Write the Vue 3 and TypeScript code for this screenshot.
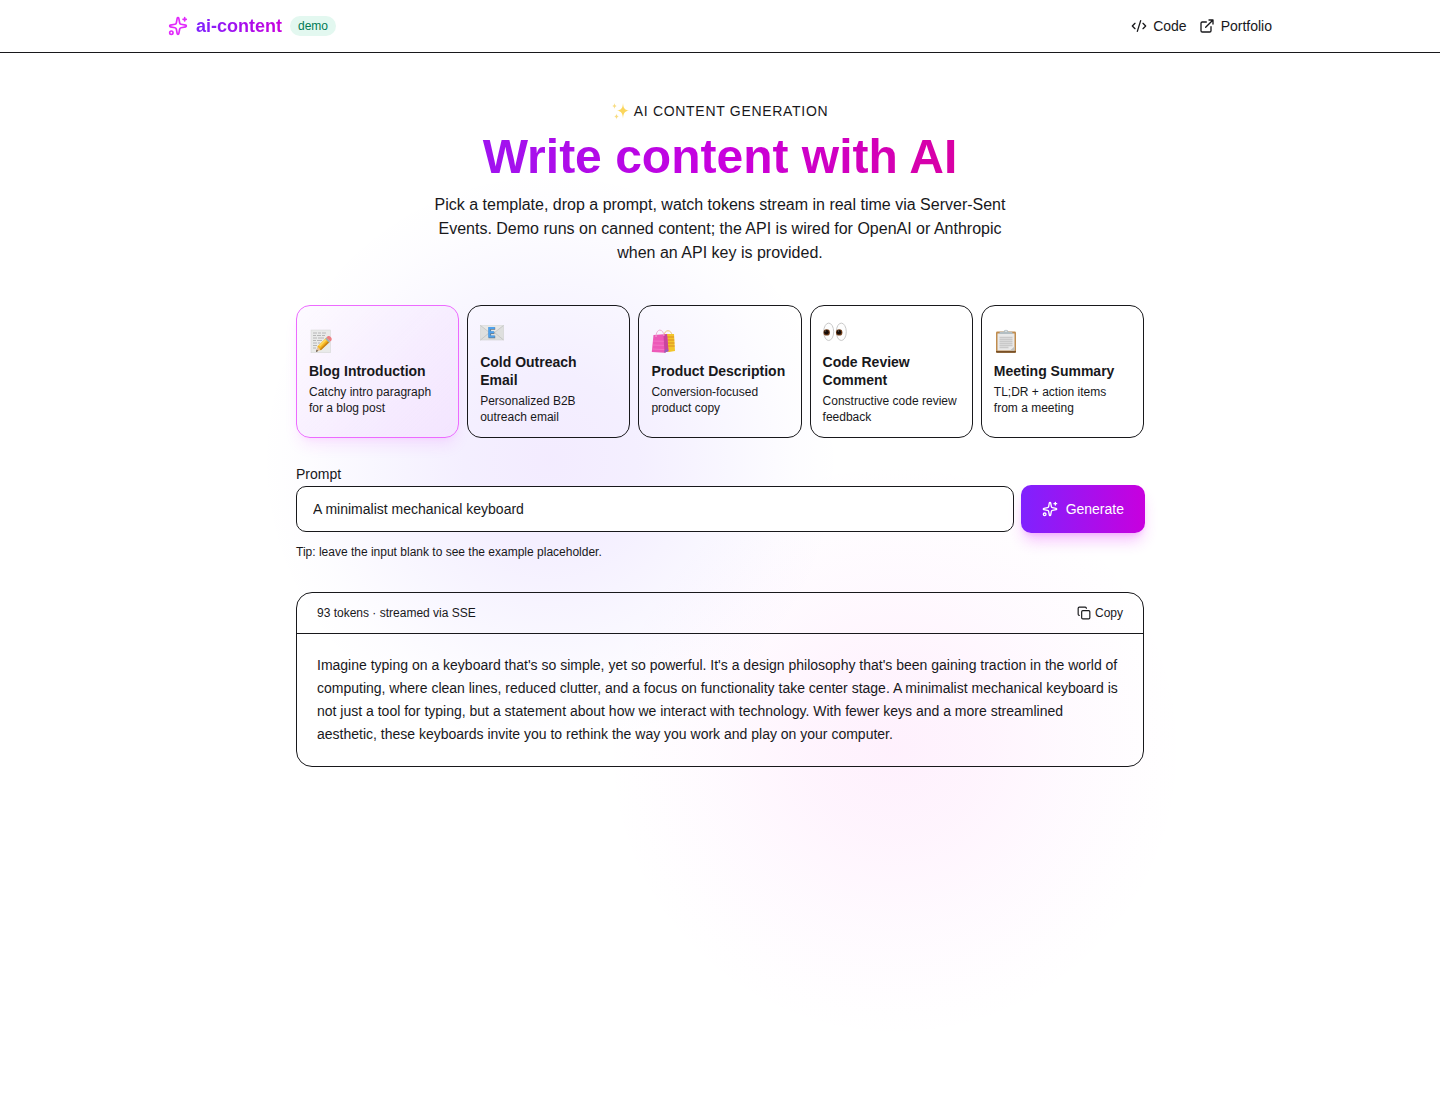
<script setup lang="ts">
import { ref } from 'vue'

interface Template {
  id: string
  title: string
  desc: string
}

const templates: Template[] = [
  { id: 'blog', title: 'Blog Introduction', desc: 'Catchy intro paragraph for a blog post' },
  { id: 'email', title: 'Cold Outreach Email', desc: 'Personalized B2B outreach email' },
  { id: 'product', title: 'Product Description', desc: 'Conversion-focused product copy' },
  { id: 'review', title: 'Code Review Comment', desc: 'Constructive code review feedback' },
  { id: 'meeting', title: 'Meeting Summary', desc: 'TL;DR + action items from a meeting' },
]

const selected = ref('blog')
const prompt = ref('A minimalist mechanical keyboard')
const tokens = 93
const output =
  "Imagine typing on a keyboard that's so simple, yet so powerful. It's a design philosophy that's been gaining traction in the world of computing, where clean lines, reduced clutter, and a focus on functionality take center stage. A minimalist mechanical keyboard is not just a tool for typing, but a statement about how we interact with technology. With fewer keys and a more streamlined aesthetic, these keyboards invite you to rethink the way you work and play on your computer."

const sparkle =
  'M11.017 2.814a1 1 0 0 1 1.966 0l1.051 5.558a2 2 0 0 0 1.594 1.594l5.558 1.051a1 1 0 0 1 0 1.966l-5.558 1.051a2 2 0 0 0-1.594 1.594l-1.051 5.558a1 1 0 0 1-1.966 0l-1.051-5.558a2 2 0 0 0-1.594-1.594l-5.558-1.051a1 1 0 0 1 0-1.966l5.558-1.051a2 2 0 0 0 1.594-1.594z'
</script>

<template>
  <div class="page">
    <div class="glow glow-violet" aria-hidden="true"></div>
    <div class="glow glow-pink" aria-hidden="true"></div>

    <header class="topbar">
      <div class="topbar-inner">
        <div class="brand">
          <svg class="line-icon brand-icon" width="20" height="20" viewBox="0 0 24 24">
            <path :d="sparkle" /><path d="M20 2v4M22 4h-4" /><circle cx="4" cy="20" r="2" />
          </svg>
          <span class="brand-name">ai-content</span>
          <span class="badge">demo</span>
        </div>
        <nav class="links">
          <a href="#code">
            <svg class="line-icon" width="16" height="16" viewBox="0 0 24 24">
              <path d="m18 16 4-4-4-4M6 8l-4 4 4 4M14.5 4l-5 16" />
            </svg>
            Code
          </a>
          <a href="#portfolio">
            <svg class="line-icon" width="16" height="16" viewBox="0 0 24 24">
              <path d="M15 3h6v6M10 14 21 3M18 13v6a2 2 0 0 1-2 2H5a2 2 0 0 1-2-2V8a2 2 0 0 1 2-2h6" />
            </svg>
            Portfolio
          </a>
        </nav>
      </div>
    </header>

    <main class="main">
      <section class="hero">
        <p class="eyebrow">
          <svg width="18" height="18" viewBox="0 0 18 18" aria-hidden="true">
            <path d="M11 1c.4 5 1.300 6.800 6 7.500-4.700.8-5.600 3-6 8-.4-5-1.300-7.200-6-8 4.700-.7 5.600-2.500 6-7.500z" fill="#fbd65c" />
            <path d="M2.500 1c.2 2 .8 2.600 2.500 3-1.700.4-2.300 1-2.500 3C2.300 5 1.700 4.400 0 4c1.700-.4 2.300-1 2.500-3zM4.500 11.500c.2 2 .8 2.600 2.500 3-1.700.4-2.300 1-2.500 3-.2-2-.8-2.600-2.500-3 1.700-.4 2.300-1 2.500-3z" fill="#f8dc80" />
          </svg>
          AI Content Generation
        </p>
        <h1>Write content with AI</h1>
        <p class="lead">
          Pick a template, drop a prompt, watch tokens stream in real time via Server-Sent Events. Demo runs on
          canned content; the API is wired for OpenAI or Anthropic when an API key is provided.
        </p>
      </section>

      <section class="templates" aria-label="Templates">
        <button
          v-for="t in templates"
          :key="t.id"
          type="button"
          class="template"
          :class="{ active: t.id === selected }"
          :aria-pressed="t.id === selected"
          @click="selected = t.id"
        >
          <svg class="emoji" width="24" height="24" viewBox="0 0 24 24" aria-hidden="true">
            <g v-if="t.id === 'blog'">
              <rect x="2" y="1" width="19.500" height="22.800" fill="#e9eae9" stroke="#d2d3d2" stroke-width=".5" />
              <path d="M4 4h4m1 0h3m1 0h4M4 6.500h3m1 0h4m1 0h3M4 9h4m1 0h6M4 11.500h3m1 0h5M4 14h4m1 0h2M4 16.500h4M4 19h3" stroke="#b0b1b1" stroke-width=".9" />
              <path d="M7 23 8.500 17.500 11.700 21z" fill="#e8c397" />
              <path d="M7 23 7.700 20.500 9 22.100z" fill="#484340" />
              <path d="M8.400 17.500 17 9l3.600 3.700-8.900 8.500z" fill="#f6b51f" />
              <path d="M9.800 16.300 18 8.200l1.300 1.300-8.200 8.200z" fill="#ffd65a" />
              <path d="m10.800 20.300 8.400-8.200 1.300 1.200-8.600 8z" fill="#c88319" />
              <path d="m16.200 9.700 1.300-1.300 3.700 3.800-1.300 1.300z" fill="#9bb0b3" />
              <path d="m17.400 8.500 1.300-1.200c2.200-1 5 2.200 3.700 4l-1.200 1.200z" fill="#ee7e83" />
            </g>
            <g v-else-if="t.id === 'email'">
              <rect x="0.500" y="5.500" width="23" height="14.500" fill="#dedfde" stroke="#cfd0cf" stroke-width=".6" />
              <path d="m.5 5.500 11.500 9 11.500-9z" fill="#e8e8e7" />
              <path d="m.5 5.500 9 7-9 7.500M23.500 5.500l-9 7 9 7.500" fill="none" stroke="#c0c1c0" stroke-width=".8" />
              <path d="M15.200 8.500H9.800v8.500h5.400M9.800 12.700h4.600" fill="none" stroke="#6b7884" stroke-width="2.600" />
              <path d="M14.700 8.100H9.300v8.500h5.400M9.300 12.300H14" fill="none" stroke="#4ea2ee" stroke-width="2" />
            </g>
            <g v-else-if="t.id === 'product'">
              <path d="M13 7c0-7 8-7 8 0" fill="none" stroke="#ecc879" stroke-width="1" />
              <path d="M12 5h11l1 17-6 1-6-1z" fill="#f2c52b" />
              <path d="M16 8h7m-7 3h7.200M16 14h7.500M16 17h7.700" stroke="#dc8c25" stroke-width="1" />
              <path d="M2.500 6 .8 23l12.700.8 4-1.800L16 5z" fill="#ed59b8" />
              <path d="m12.500 6 3.500-1 1.500 17-4 1.800z" fill="#c9459f" />
              <path d="m13.500 22 2-2.500 2 2.500-4 1.800z" fill="#9261bc" />
              <path d="M5 8c0-9 7.500-9 8-1" fill="none" stroke="#edaed4" stroke-width="1" />
              <path d="m2 12 10.800.3M1.700 16l11.200.4M1.300 20l11.900.6" stroke="#f57fcb" stroke-width=".7" />
            </g>
            <g v-else-if="t.id === 'review'">
              <ellipse cx="5.700" cy="11.800" rx="5" ry="8.700" fill="#fdfdfd" stroke="#c9c9c9" stroke-width="1" />
              <ellipse cx="18.300" cy="11.800" rx="5" ry="8.700" fill="#fdfdfd" stroke="#c9c9c9" stroke-width="1" />
              <circle cx="3.700" cy="12.400" r="3.200" fill="#74401c" /><circle cx="16.200" cy="12.400" r="3.200" fill="#74401c" />
              <circle cx="3.500" cy="12.200" r="2.300" fill="#160d08" /><circle cx="16" cy="12.200" r="2.300" fill="#160d08" />
              <circle cx="2.800" cy="11" r=".4" fill="#ddd" /><circle cx="15.300" cy="11" r=".4" fill="#ddd" />
            </g>
            <g v-else>
              <rect x="2" y="2.500" width="20" height="21.300" rx="1.200" fill="#c08c4e" />
              <path d="M2 22h20v.8a1 1 0 0 1-1 1H3a1 1 0 0 1-1-1z" fill="#785027" />
              <rect x="3.500" y="4.500" width="17" height="17" fill="#e9e9e9" />
              <path d="M5.500 8.500h13M5.500 10.500h13M5.500 12.500h13M5.500 14.500h13M5.500 16.500h13M5.500 18.500h9" stroke="#c9c9c9" stroke-width="1.500" />
              <path d="m16 21.500 4.500-4v4z" fill="#bfc2c2" />
              <path d="M5 5 6 2.800h3.500c.5-2.700 4.500-2.700 5 0H18L19 5z" fill="#b3bec2" />
              <circle cx="12" cy="2.300" r=".8" fill="#eceff0" />
            </g>
          </svg>
          <span class="template-title">{{ t.title }}</span>
          <span class="template-desc">{{ t.desc }}</span>
        </button>
      </section>

      <form class="prompt" @submit.prevent>
        <label for="prompt">Prompt</label>
        <div class="prompt-row">
          <input id="prompt" v-model="prompt" type="text" />
          <button type="submit" class="generate">
            <svg class="line-icon" width="16" height="16" viewBox="0 0 24 24">
              <path :d="sparkle" /><path d="M20 2v4M22 4h-4" /><circle cx="4" cy="20" r="2" />
            </svg>
            Generate
          </button>
        </div>
        <p class="tip">Tip: leave the input blank to see the example placeholder.</p>
      </form>

      <section class="result">
        <div class="result-head">
          <span>{{ tokens }} tokens · streamed via SSE</span>
          <button type="button" class="copy">
            <svg class="line-icon" width="14" height="14" viewBox="0 0 24 24">
              <rect x="8" y="8" width="14" height="14" rx="2" />
              <path d="M4 16c-1.100 0-2-.9-2-2V4c0-1.100.9-2 2-2h10c1.100 0 2 .9 2 2" />
            </svg>
            Copy
          </button>
        </div>
        <p class="result-body">{{ output }}</p>
      </section>
    </main>
  </div>
</template>

<style>
body {
  background: #fff;
}
</style>

<style scoped>
.page {
  position: relative;
  min-height: 100vh;
  overflow: hidden;
  font-family: 'Liberation Sans', Arial, sans-serif;
  font-size: 14px;
  line-height: 20px;
  color: #18181b;
}
.page * {
  box-sizing: border-box;
}
p,
h1 {
  margin: 0;
}
button,
input {
  font: inherit;
  color: inherit;
}
button {
  cursor: pointer;
}
.line-icon {
  flex: none;
  fill: none;
  stroke: currentColor;
  stroke-width: 2;
  stroke-linecap: round;
  stroke-linejoin: round;
}

/* Soft colour washes behind the page */
.glow {
  position: absolute;
  width: 580px;
  height: 580px;
  border-radius: 50%;
  pointer-events: none;
}
.glow-violet {
  top: 170px;
  left: calc(50% - 460px);
  background: radial-gradient(closest-side, #8030ff18, #7434ff14 30%, #6a3cff0b 60%, #6a3cff03 85%, transparent);
}
.glow-pink {
  top: 460px;
  left: calc(50% - 115px);
  background: radial-gradient(closest-side, #f646e614, #f646e60f 30%, #f050f008 60%, #f050f002 88%, transparent);
}

.topbar {
  position: relative;
  border-bottom: 1px solid #18181b;
  background: #fff;
}
.topbar-inner {
  display: flex;
  align-items: center;
  justify-content: space-between;
  max-width: 1152px;
  margin: 0 auto;
  padding: 12px 24px;
}
.brand {
  display: flex;
  align-items: center;
  gap: 8px;
}
.brand-icon {
  color: #e12afb;
}
.brand-name {
  font-size: 18px;
  line-height: 28px;
  font-weight: 700;
  color: transparent;
  background: linear-gradient(90deg, #7f22fe, #c800de);
  background-clip: text;
}
.badge {
  padding: 2px 8px;
  border-radius: 10px;
  font-size: 12px;
  line-height: 16px;
  color: #007a55;
  background: #e3f8f0;
}
.links {
  display: flex;
  gap: 12px;
}
.links a {
  display: flex;
  align-items: center;
  gap: 6px;
  color: inherit;
  text-decoration: none;
}

.main {
  position: relative;
  max-width: 896px;
  margin: 0 auto;
  padding: 48px 24px;
}
.hero {
  display: flex;
  flex-direction: column;
  align-items: center;
  gap: 12px;
  text-align: center;
}
.eyebrow {
  display: flex;
  align-items: center;
  gap: 4px;
  text-transform: uppercase;
  letter-spacing: 0.05em;
}
h1 {
  align-self: stretch;
  font-size: 48px;
  line-height: 48px;
  font-weight: 700;
  color: transparent;
  background: linear-gradient(90deg, #7f22fe, #c800de, #e60076);
  background-clip: text;
}
.lead {
  max-width: 576px;
  font-size: 16px;
  line-height: 24px;
}

.templates {
  display: grid;
  grid-template-columns: repeat(5, 1fr);
  gap: 8px;
  margin-top: 40px;
}
.template {
  display: flex;
  flex-direction: column;
  justify-content: center;
  align-items: flex-start;
  padding: 12px;
  border: 1px solid #18181b;
  border-radius: 14px;
  background: transparent;
  text-align: left;
}
.template.active {
  border-color: #ed6aff;
  background: linear-gradient(135deg, #faf5ff80, #f3e2ffcc);
  box-shadow: 0 10px 15px -3px #e12afb1a, 0 4px 6px -4px #e12afb1a;
}
.emoji {
  margin: 2px 0 9px;
}
.template-title {
  font-weight: 700;
  line-height: 18px;
}
.template-desc {
  margin-top: 4px;
  font-size: 12px;
  line-height: 16px;
}

.prompt {
  display: flex;
  flex-direction: column;
  margin-top: 26px;
}
.prompt-row {
  display: flex;
  gap: 8px;
  margin-top: 2px;
}
.prompt input {
  flex: 1;
  min-width: 0;
  height: 46px;
  padding: 0 16px;
  border: 1px solid #18181b;
  border-radius: 10px;
  background: #fff;
}
.generate {
  display: flex;
  align-items: center;
  justify-content: center;
  gap: 8px;
  margin: -1px;
  padding: 0 21px;
  border: 0;
  border-radius: 10px;
  color: #fff;
  background: linear-gradient(90deg, #7f22fe, #c800de);
  box-shadow: 0 10px 15px -3px #e12afb4d, 0 4px 6px -4px #e12afb4d;
}
.tip {
  margin-top: 12px;
  font-size: 12px;
  line-height: 16px;
}

.result {
  margin-top: 32px;
  border: 1px solid #18181b;
  border-radius: 16px;
}
.result-head {
  display: flex;
  align-items: center;
  justify-content: space-between;
  padding: 12px 20px;
  border-bottom: 1px solid #18181b;
  font-size: 12px;
  line-height: 16px;
}
.copy {
  display: flex;
  align-items: center;
  gap: 4px;
  padding: 0;
  border: 0;
  background: none;
}
.result-body {
  padding: 20px;
  line-height: 23px;
}
</style>
